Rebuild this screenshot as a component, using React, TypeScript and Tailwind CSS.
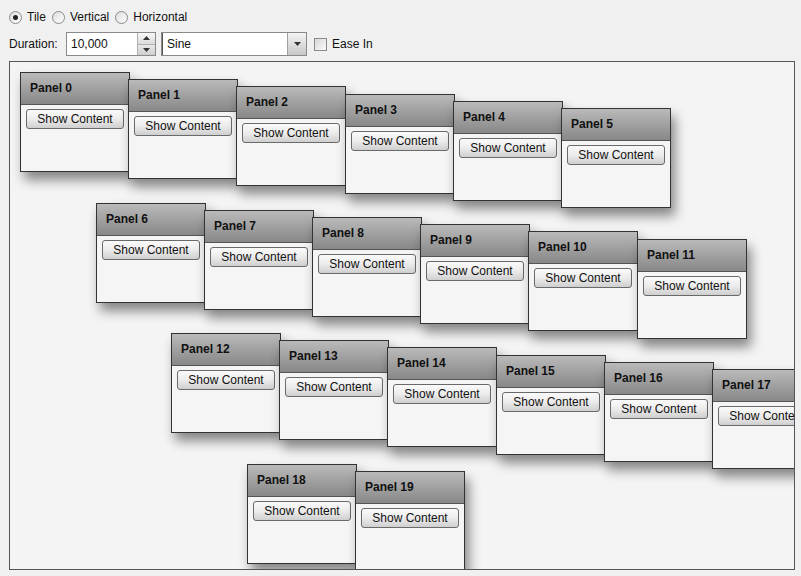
import React from "react";

const FONT = { fontFamily: '"Liberation Sans", Arial, sans-serif' };

// desktop layout: 4 rows, staggered to the right and down
const panels = Array.from({ length: 20 }, (_, i) => {
  const r = Math.floor(i / 6);
  const c = i % 6;
  return {
    id: i,
    left: Math.round(10 + 75.5 * r + 108.2 * c),
    top: Math.round(10 + 130.5 * r + 7.2 * c),
  };
});

function Radio({ checked, label }: { checked?: boolean; label: string }) {
  return (
    <label className="flex items-center gap-[5px]">
      <span className="w-[13px] h-[13px] rounded-full border border-[#8a8a8a] bg-gradient-to-br from-[#dcdcdc] to-[#ffffff] flex items-center justify-center">
        {checked && <span className="w-[5px] h-[5px] rounded-full bg-[#222]" />}
      </span>
      <span>{label}</span>
    </label>
  );
}

function Panel({ id, left, top }: { id: number; left: number; top: number }) {
  return (
    <div
      className="absolute w-[110px] h-[100px] border border-[#333] bg-[#f5f5f5] shadow-[4px_8px_11px_rgba(0,0,0,0.45)] flex flex-col"
      style={{ left, top }}
    >
      <div className="h-[32px] shrink-0 border-b border-[#555] bg-gradient-to-b from-[#bababa] to-[#888888] pl-[9px] pb-[2px] flex items-center">
        <span className="text-[12px] font-bold text-[#111]">Panel {id}</span>
      </div>
      <div className="pt-[4px] pl-[5px]">
        <button className="w-[98px] h-[20px] rounded-[3px] border border-[#6a6a6a] bg-gradient-to-b from-[#fafafa] via-[#ececec] to-[#cfcfcf] text-[12px] text-[#111] leading-none">
          Show Content
        </button>
      </div>
    </div>
  );
}

export default function App() {
  return (
    <div className="w-[801px] h-[576px] bg-[#f0f0f0] text-[12px] text-[#111] overflow-hidden" style={FONT}>
      <div className="pl-[9px] pt-[10px] flex items-center gap-[6px] h-[14px] box-content">
        <Radio checked label="Tile" />
        <Radio label="Vertical" />
        <Radio label="Horizontal" />
      </div>

      <div className="pl-[9px] mt-[8px] flex items-center h-[24px]">
        <span className="w-[57px]">Duration:</span>
        <div className="w-[90px] h-[24px] border border-[#8a8a8a] bg-white flex">
          <span className="flex-1 pl-[4px] flex items-center">10,000</span>
          <div className="w-[18px] flex flex-col border-l border-[#b0b0b0]">
            <div className="flex-1 flex items-center justify-center bg-gradient-to-b from-[#f8f8f8] to-[#dcdcdc] border-b border-[#b0b0b0]">
              <svg width="7" height="4" viewBox="0 0 7 4"><path d="M0 4L3.5 0L7 4Z" fill="#333" /></svg>
            </div>
            <div className="flex-1 flex items-center justify-center bg-gradient-to-b from-[#e8e8e8] to-[#cfcfcf]">
              <svg width="7" height="4" viewBox="0 0 7 4"><path d="M0 0L3.5 4L7 0Z" fill="#333" /></svg>
            </div>
          </div>
        </div>
        <div className="ml-[5px] w-[146px] h-[24px] border border-[#8a8a8a] bg-white flex">
          <span className="flex-1 pl-[4px] flex items-center border-l border-[#555]">Sine</span>
          <div className="w-[19px] flex items-center justify-center border-l border-[#a0a0a0] bg-gradient-to-b from-[#f4f4f4] to-[#c8c8c8]">
            <svg width="7" height="4" viewBox="0 0 7 4"><path d="M0 0L3.5 4L7 0Z" fill="#333" /></svg>
          </div>
        </div>
        <span className="ml-[7px] w-[13px] h-[13px] border border-[#8a8a8a] bg-gradient-to-br from-[#d8d8d8] to-[#fafafa]" />
        <span className="ml-[5px]">Ease In</span>
      </div>

      <div className="relative ml-[9px] mt-[5px] w-[786px] h-[509px] border border-[#555] bg-[#f4f4f4] overflow-hidden">
        {panels.map((p) => (
          <Panel key={p.id} {...p} />
        ))}
      </div>
    </div>
  );
}
